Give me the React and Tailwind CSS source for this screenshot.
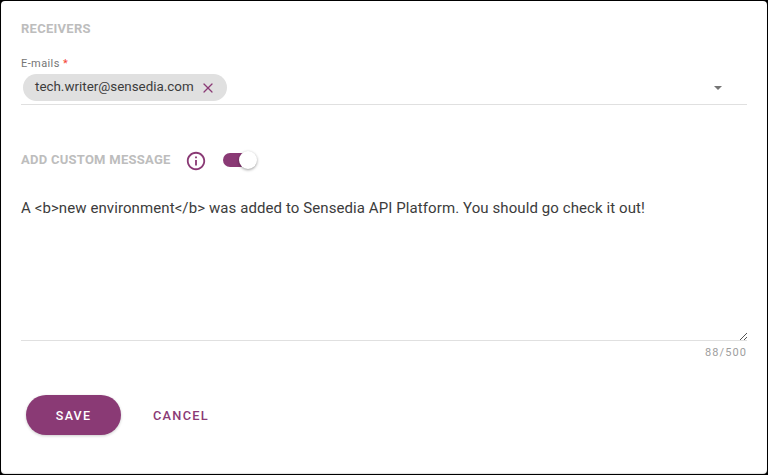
import React from 'react';
import { X } from 'lucide-react';

const App = () => {
  return (
    <div className="w-[768px] h-[475px] bg-black p-px font-['Roboto',sans-serif]">
      <div className="w-[766px] h-[473px] bg-white rounded-[4px] shadow-[inset_0_-1px_1px_rgba(0,0,0,0.12)] pl-5 pr-5 pt-[20px] overflow-hidden">
        <div className="text-[13px] leading-[15px] tracking-[0.26px] font-bold text-[#bdbdbd]">RECEIVERS</div>

        {/* e-mails */}
        <div className="mt-[21px] w-[726px] border-b border-[#e0e0e0] h-[48px]">
          <div className="text-[11px] leading-[13px] tracking-[0.4px] text-[#757575]">
            E-mails <span className="text-[#f44336]">*</span>
          </div>
          <div className="flex items-center justify-between mt-[4px]">
            <div className="ml-[2px] flex items-center h-[27px] rounded-full bg-[#e0e0e0] pl-3 pr-[11px] gap-[6px]">
              <span className="text-[13.4px] text-[#3c3c3c]">tech.writer@sensedia.com</span>
              <X size={16} strokeWidth={1.8} className="text-[#8a3a75]" />
            </div>
            <div className="mr-[25px] w-0 h-0 border-x-[4px] border-x-transparent border-t-[4px] border-t-[#757575]" />
          </div>
        </div>

        {/* custom message */}
        <div className="mt-[44px] flex items-center h-[22px]">
          <span className="text-[13px] tracking-[0.26px] font-bold text-[#bdbdbd]">ADD CUSTOM MESSAGE</span>
          <svg className="ml-[14px] mt-[2px]" width="22" height="22" viewBox="0 0 24 24" fill="#8a3a75">
            <path d="M11 7h2v2h-2zm0 4h2v6h-2zm1-9C6.48 2 2 6.48 2 12s4.480 10 10 10 10-4.480 10-10S17.520 2 12 2zm0 18c-4.410 0-8-3.590-8-8s3.590-8 8-8 8 3.590 8 8-3.590 8-8 8z" />
          </svg>
          <div className="relative ml-[16px] w-[30px] h-[14px] rounded-full bg-[#8a3a75]">
            <div className="absolute -right-[4px] -top-[2px] w-[18px] h-[18px] rounded-full bg-white shadow-[0_1px_3px_rgba(0,0,0,0.4)]" />
          </div>
        </div>

        <div className="mt-[26px] w-[726px] h-[144px] border-b border-[#e0e0e0] relative">
          <p className="pt-px text-[15px] leading-[20px] tracking-[0.09px] text-[#3c3c3c]">
            A &lt;b&gt;new environment&lt;/b&gt; was added to Sensedia API Platform. You should go check it out!
          </p>
          <svg className="absolute right-0 bottom-0" width="7" height="7" viewBox="0 0 7 7" stroke="#555555" strokeWidth="1">
            <path d="M0 7L7 0M4 7L7 4" />
          </svg>
        </div>
        <div className="w-[726px] text-right text-[11px] leading-[13px] mt-[5px] tracking-[1.1px] text-[#9e9e9e]">88/500</div>

        {/* actions */}
        <div className="mt-[36px] flex items-center ml-[5px]">
          <button className="w-[95px] h-[40px] pt-[2px] rounded-full bg-[#8a3a75] text-white text-[12.5px] font-medium tracking-[1.2px] shadow-[0_1px_3px_rgba(0,0,0,0.2)]">SAVE</button>
          <button className="ml-[32px] pt-px text-[#8a3a75] text-[12.8px] font-medium tracking-[1.25px]">CANCEL</button>
        </div>
      </div>
    </div>
  );
};

export default App;
